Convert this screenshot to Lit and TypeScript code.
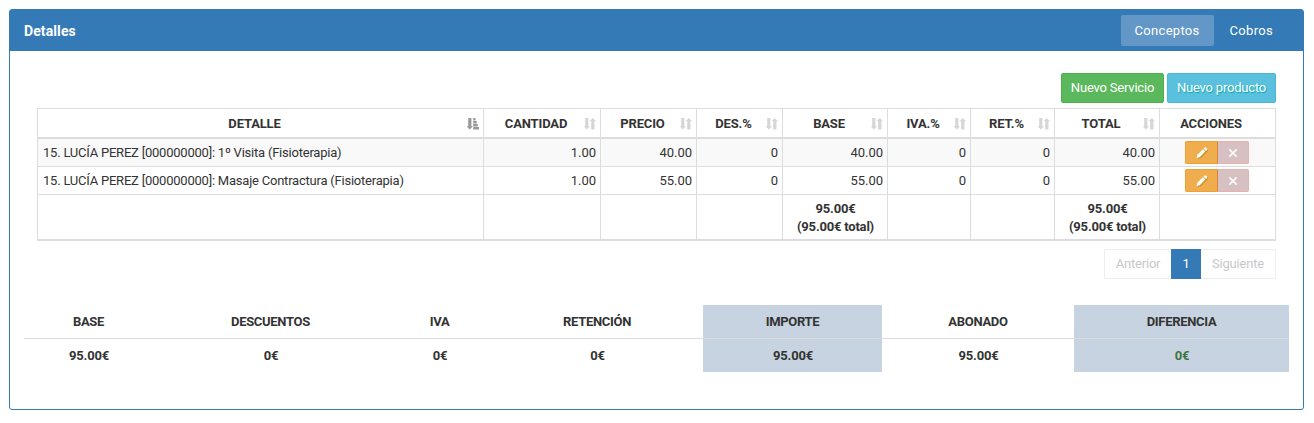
import { LitElement, html, css, svg } from "lit";
import { customElement } from "lit/decorators.js";
import { classMap } from "lit/directives/class-map.js";

const COLUMNS = ["DETALLE", "CANTIDAD", "PRECIO", "DES.%", "BASE", "IVA.%", "RET.%", "TOTAL"];
const ROWS = [
  ["15. LUCÍA PEREZ [000000000]: 1º Visita (Fisioterapia)", "1.00", "40.00", "0", "40.00", "0", "0", "40.00"],
  ["15. LUCÍA PEREZ [000000000]: Masaje Contractura (Fisioterapia)", "1.00", "55.00", "0", "55.00", "0", "0", "55.00"],
];
const SUMMARY = [
  { label: "BASE", value: "95.00€" },
  { label: "DESCUENTOS", value: "0€" },
  { label: "IVA", value: "0€" },
  { label: "RETENCIÓN", value: "0€" },
  { label: "IMPORTE", value: "95.00€", shaded: true },
  { label: "ABONADO", value: "95.00€" },
  { label: "DIFERENCIA", value: "0€", shaded: true, ok: true },
];

const down = svg`<path d="M1.2 0h3.2v8.3H6L2.8 11.6 -.4 8.3h1.6z"/>`;
const sortBoth = html`<svg class="sort" width="12" height="12" viewBox="0 0 12 12">${down}<path d="M7.2 11.5h3.2V3.3H12L8.8 0 5.6 3.3h1.6z"/></svg>`;
const sortAsc = html`<svg class="sort active" width="12" height="12" viewBox="0 0 12 12">${down}<path d="M6.2 0h2.3v2.4H6.2zM6.2 3h3.5v2.4H6.2zM6.2 6h4.6v2.4H6.2zM6.2 9H12v2.4H6.2z"/></svg>`;
const pencil = html`<svg width="12" height="12" viewBox="0 0 12 12"><path class="shade" d="M2 12l3-1 7-7-1-2-9 8z"/><path d="M0.5 11l.8-3.2 5.6-5.6 2.4 2.4-5.6 5.6zM7.6 1.5l1-1q.6-.5 1.2 0l1.2 1.2q.5.6 0 1.2l-1 1z"/></svg>`;
const cross = html`<svg width="10" height="10" viewBox="0 0 10 10"><path d="M1.3 1.3l7.4 7.4M8.7 1.3L1.3 8.7" fill="none" stroke="#fff" stroke-opacity=".9" stroke-width="1.8"/></svg>`;

@customElement("app-root")
export class AppRoot extends LitElement {
  static styles = css`
    :host {
      display: block;
      box-sizing: border-box;
      height: 423px;
      padding: 9px 10px 13px 9px;
      background: #fff;
      color: #333;
      font: 13px/18px Roboto, sans-serif;
      letter-spacing: -0.2px;
    }
    * { box-sizing: border-box; }
    .panel { height: 401px; border: 1px solid #337ab7; border-radius: 3px; }
    .head {
      display: flex;
      align-items: center;
      justify-content: space-between;
      height: 41px;
      padding: 0 16px 0 14px;
      background: #337ab7;
      color: #fff;
    }
    .title { font-size: 14px; font-weight: 700; letter-spacing: 0.1px; }
    .tabs { display: flex; }
    .tab { height: 31px; padding: 0 14px; line-height: 31px; border-radius: 2px; letter-spacing: 0.3px; }
    .tab.on { background: #6397c8; margin-right: 2px; }
    .body { padding: 22px 27px 0; }
    .actions { display: flex; justify-content: flex-end; gap: 3px; height: 30px; }
    .btn { height: 30px; border: 1px solid; border-radius: 2px; text-align: center; line-height: 28px; color: #fff; }
    .service { width: 103px; background: #5cb85c; border-color: #4cae4c; }
    .product { width: 109px; background: #5bc0de; border-color: #46b8da; text-shadow: 1px 1px 1px #0aa; }
    .table {
      display: grid;
      grid-template-columns: 446px 117px 96px 86px 105px 83px 84px 105px 116px;
      grid-template-rows: 30px 28px 28px 46px;
      margin-top: 5px;
      border: solid #ddd;
      border-width: 1px 0 0 1px;
    }
    .cell {
      display: flex;
      align-items: center;
      justify-content: flex-end;
      padding: 0 4px 0 5px;
      border: solid #ddd;
      border-width: 0 1px 1px 0;
      white-space: nowrap;
      letter-spacing: -0.05px;
    }
    .cell.text { justify-content: flex-start; letter-spacing: -0.22px; }
    .cell.mid { justify-content: center; padding: 0 4px 0 3px; }
    .cell.odd { background: #f9f9f9; }
    .cell.th { font-weight: 700; border-bottom-width: 2px; padding: 2px 4px 0 6px; letter-spacing: -0.15px; }
    .cell.th span { flex: 1; text-align: center; }
    .cell.th .none { width: 15px; }
    .cell.tf { justify-content: center; padding: 2px 0 0 1px; border-bottom-width: 2px; font-weight: 700; text-align: center; letter-spacing: -0.2px; }
    .sort { width: 12px; margin-left: 2px; fill: #d6d6d6; }
    .sort.active { fill: #999; }
    .pair { display: flex; }
    .mini { display: flex; align-items: center; justify-content: center; height: 23px; border: 1px solid; fill: #fff; }
    .edit { width: 33px; background: #f0ad4e; border-color: #eea236 #e0843a #eea236 #eea236; border-radius: 2px 0 0 2px; }
    .del { width: 31px; background: #d7c0c1; border-color: #ebafaf; border-left: 0; border-radius: 0 2px 2px 0; }
    .shade { fill: #b8860b; opacity: 0.65; }
    .pager { display: flex; justify-content: flex-end; margin-top: 8px; height: 30px; line-height: 28px; text-align: center; color: #c8c8c8; }
    .page { border: 1px solid #eee; }
    .prev { width: 67px; border-right: 0; border-radius: 2px 0 0 2px; }
    .next { width: 75px; border-left: 0; border-radius: 0 2px 2px 0; }
    .current { width: 30px; background: #337ab7; border-color: #337ab7; color: #fff; }
    .summary {
      display: grid;
      grid-template-columns: 129px 235px 103px 212px 179px 192px 215px;
      margin: 26px 14px 0;
      font-weight: 700;
      text-align: center;
    }
    .label { height: 34px; line-height: 33px; border-bottom: 1px solid #ddd; letter-spacing: -0.3px; }
    .value { height: 33px; line-height: 33px; padding-left: 1px; letter-spacing: -0.15px; }
    .shaded { background: #c7d3e0; }
    .ok { color: #3c763d; }
  `;

  render() {
    return html`
      <div class="panel">
        <div class="head">
          <div class="title">Detalles</div>
          <div class="tabs"><div class="tab on">Conceptos</div><div class="tab">Cobros</div></div>
        </div>
        <div class="body">
          <div class="actions"><div class="btn service">Nuevo Servicio</div><div class="btn product">Nuevo producto</div></div>
          <div class="table">
            ${COLUMNS.map((c, i) => html`<div class="cell th"><span>${c}</span>${i === 0 ? sortAsc : sortBoth}</div>`)}
            <div class="cell th"><span>ACCIONES</span><div class="none"></div></div>
            ${ROWS.map((row, r) => html`
              ${row.map((v, i) => html`<div class=${classMap({ cell: true, text: i === 0, odd: r === 0 })}>${v}</div>`)}
              <div class=${classMap({ cell: true, mid: true, odd: r === 0 })}>
                <div class="pair"><div class="mini edit">${pencil}</div><div class="mini del">${cross}</div></div>
              </div>`)}
            ${[...COLUMNS, ""].map((c) => html`<div class="cell tf">${c === "BASE" || c === "TOTAL" ? html`<div>95.00€<br />(95.00€ total)</div>` : ""}</div>`)}
          </div>
          <div class="pager"><div class="page prev">Anterior</div><div class="page current">1</div><div class="page next">Siguiente</div></div>
        </div>
        <div class="summary">
          ${SUMMARY.map((s) => html`<div class=${classMap({ label: true, shaded: !!s.shaded })}>${s.label}</div>`)}
          ${SUMMARY.map((s) => html`<div class=${classMap({ value: true, shaded: !!s.shaded, ok: !!s.ok })}>${s.value}</div>`)}
        </div>
      </div>
    `;
  }
}
